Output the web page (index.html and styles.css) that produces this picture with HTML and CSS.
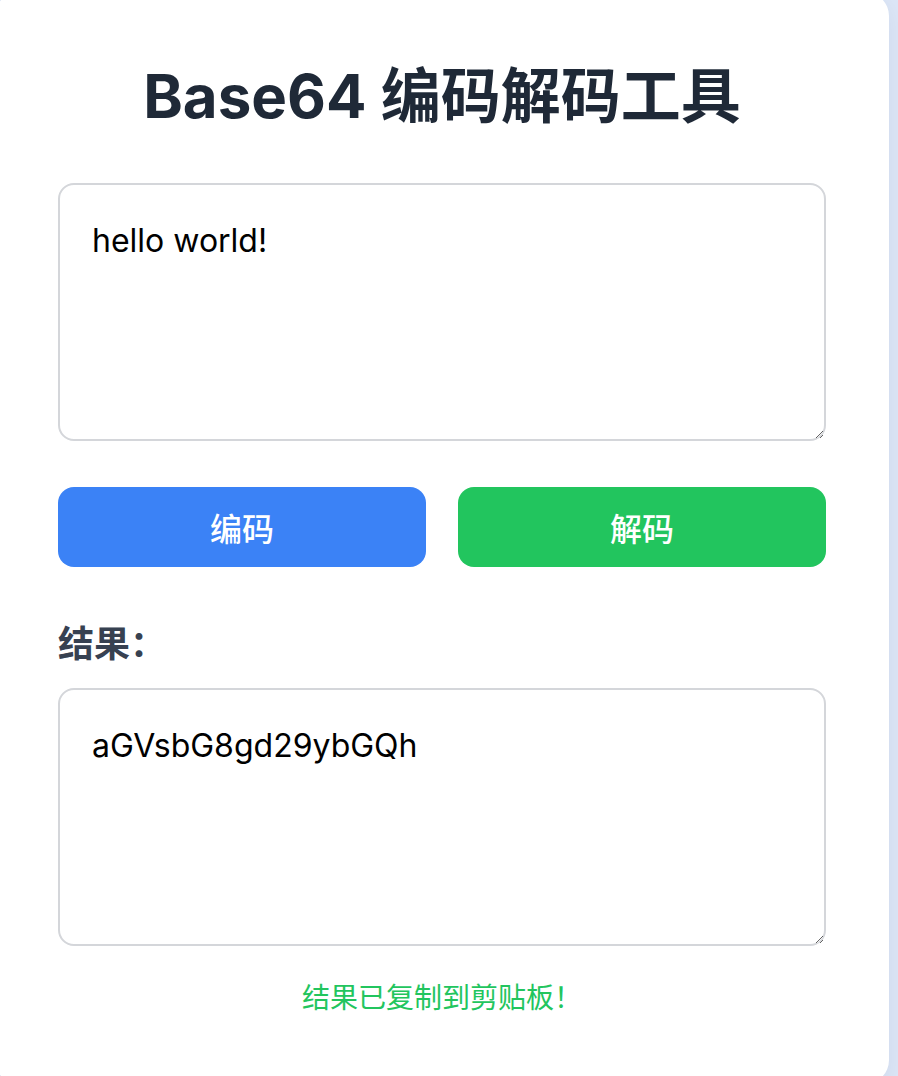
FILE: index.html
```html
<!DOCTYPE html>
<html lang="zh-CN">
<head>
<meta charset="utf-8">
<title>Base64 编码解码工具</title>
<link rel="stylesheet" href="styles.css">
</head>
<body>
<main class="card">
  <h1 class="title">Base64 编码解码工具</h1>
  <textarea class="field">hello world!</textarea>
  <div class="actions">
    <button class="btn btn-encode">编码</button>
    <button class="btn btn-decode">解码</button>
  </div>
  <label class="label">结果：</label>
  <textarea class="field">aGVsbG8gd29ybGQh</textarea>
  <p class="notice">结果已复制到剪贴板！</p>
</main>
</body>
</html>
```

FILE: styles.css
```css
html, body {
  margin: 0;
  padding: 0;
  overflow: hidden;
  height: 100%;
}
body {
  background: #dce6f7;
  font-family: "Inter", "Noto Sans CJK SC", sans-serif;
}
.card {
  box-sizing: border-box;
  width: 894px;
  height: 1092px;
  margin: -8px 0 0 -5px;
  padding: 68px 63px 0 63px;
  background: #ffffff;
  border-radius: 24px;
  box-shadow: 0 8px 24px rgba(30, 41, 59, 0.06);
}
.title {
  margin: 0 0 51px;
  font-size: 60px;
  line-height: 72px;
  font-weight: 700;
  color: #1f2937;
  text-align: center;
}
.field {
  display: block;
  box-sizing: border-box;
  width: 100%;
  height: 258px;
  margin: 0;
  padding: 32px;
  border: 2px solid #d4d6da;
  border-radius: 16px;
  font-family: "Inter", "Noto Sans CJK SC", sans-serif;
  font-size: 32px;
  line-height: 48px;
  color: #000;
  background: #fff;
  outline: none;
}
.actions {
  display: grid;
  grid-template-columns: 1fr 1fr;
  gap: 32px;
  margin-top: 46px;
}
.btn {
  height: 80px;
  border: none;
  border-radius: 16px;
  color: #fff;
  font-family: "Inter", "Noto Sans CJK SC", sans-serif;
  font-size: 32px;
  font-weight: 500;
}
.btn-encode { background: #3b82f6; }
.btn-decode { background: #22c55e; }
.label {
  display: block;
  margin: 53px 0 20px;
  font-size: 36px;
  line-height: 48px;
  font-weight: 600;
  color: #374151;
}
.notice {
  margin: 31px 0 0;
  font-size: 28px;
  line-height: 42px;
  color: #22c55e;
  text-align: center;
}
```
